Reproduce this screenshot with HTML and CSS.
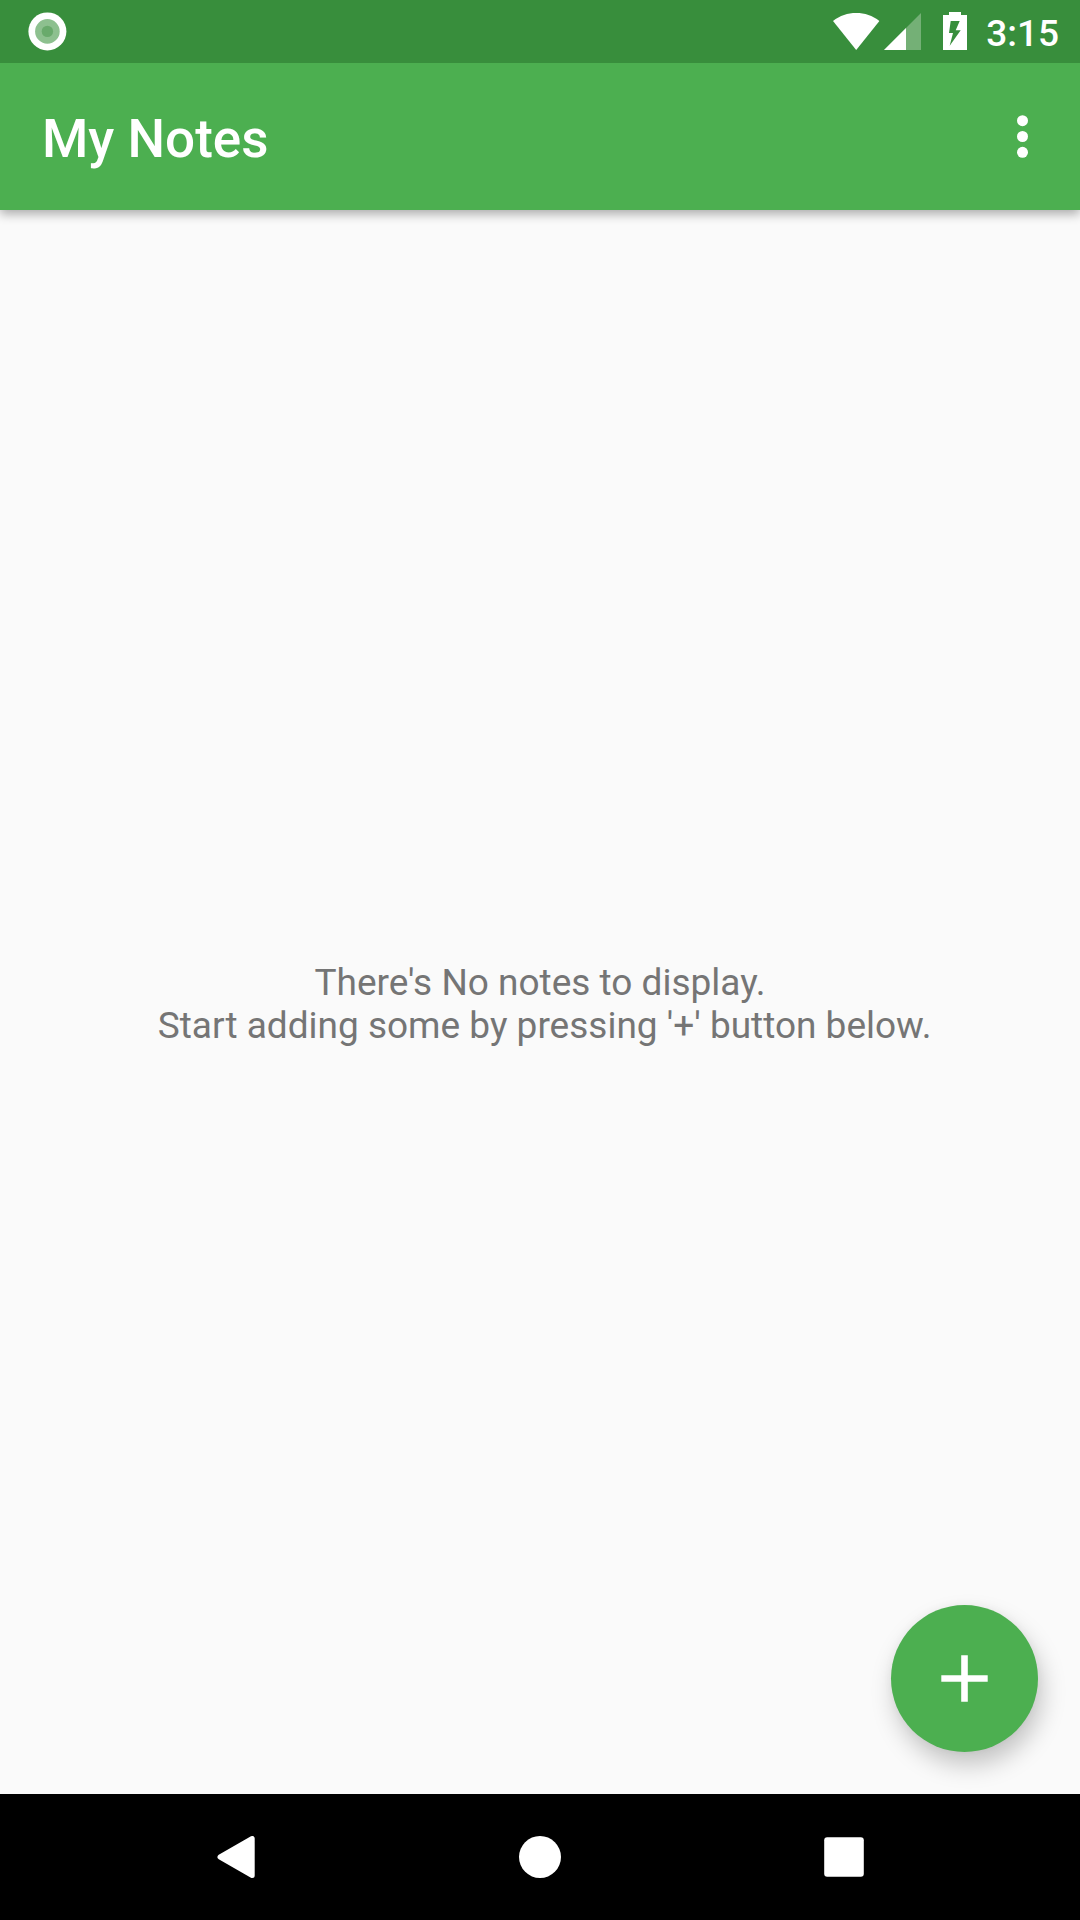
FILE: index.html
```html
<!DOCTYPE html>
<html lang="en">
<head>
<meta charset="utf-8">
<title>My Notes</title>
<link rel="stylesheet" href="styles.css">
</head>
<body>
<div class="screen">
  <div class="status-bar">
    <svg class="recording" width="40" height="40" viewBox="0 0 40 40">
      <circle cx="20.4" cy="20.4" r="19" fill="#fff"/>
      <circle cx="20.4" cy="20.4" r="12.3" fill="#8dc08f"/>
      <circle cx="20.4" cy="20.4" r="5.7" fill="#69aa6c"/>
    </svg>
    <div class="status-icons">
      <svg class="wifi" width="47" height="38" viewBox="0 0 47 38">
        <path d="M23.2 38 0 9C7 3.600 14.600 1 23.200 1S39.400 3.600 46.400 9Z" fill="#fff"/>
      </svg>
      <svg class="signal" width="37" height="37" viewBox="0 0 37 37">
        <path d="M37 0V37H0Z" fill="#fff" fill-opacity=".3"/>
        <path d="M22 15V37H0Z" fill="#fff"/>
      </svg>
      <svg class="battery" width="24" height="38" viewBox="0 0 24 38">
        <path fill="#fff" fill-rule="evenodd" d="M6 0H18V3H24V38H0V3H6ZM7.700 9 6 21H10L6.700 33.700 17.700 18.300H12.700L16.700 9Z"/>
      </svg>
      <span class="clock">3:15</span>
    </div>
  </div>
  <header class="app-bar">
    <h1 class="title">My Notes</h1>
    <svg class="overflow" width="12" height="44" viewBox="0 0 12 44" fill="#fff">
      <circle cx="5.500" cy="5.700" r="5.500"/>
      <circle cx="5.500" cy="21.500" r="5.500"/>
      <circle cx="5.500" cy="37.300" r="5.500"/>
    </svg>
  </header>
  <main class="content">
    <p class="empty">There's No notes to display.
 Start adding some by pressing '+' button below.</p>
    <button class="fab" aria-label="Add note">
      <svg width="147" height="147" viewBox="0 0 147 147">
        <path d="M50.300 73.500H96.700M73.500 50.300V96.700" stroke="#fff" stroke-width="6.600"/>
      </svg>
    </button>
  </main>
  <nav class="nav-bar">
    <svg width="42" height="42" viewBox="0 0 42 42">
      <path d="M37.200 2.500V39.500L5 21Z" fill="#fff" stroke="#fff" stroke-width="5" stroke-linejoin="round"/>
    </svg>
    <svg width="42" height="42" viewBox="0 0 42 42">
      <circle cx="21" cy="21" r="21" fill="#fff"/>
    </svg>
    <svg width="42" height="42" viewBox="0 0 42 42">
      <rect x="1.200" y="1.200" width="39.600" height="39.600" rx="3" fill="#fff"/>
    </svg>
  </nav>
</div>
</body>
</html>
```
FILE: styles.css
```css
* {
  box-sizing: border-box;
}

body {
  margin: 0;
  font-family: Roboto, sans-serif;
}

svg {
  display: block;
}

.screen {
  display: flex;
  flex-direction: column;
  width: 1080px;
  height: 1920px;
  overflow: hidden;
  background: #fafafa;
}

.status-bar {
  display: flex;
  justify-content: space-between;
  height: 63px;
  padding: 11px 21px 0 27px;
  background: #388e3c;
  z-index: 2;
}

.status-icons {
  display: grid;
  grid-template-columns: 47px 41px 42px auto;
  column-gap: 4px;
  align-items: start;
  width: 226px;
}

.wifi {
  margin-top: 1px;
}

.signal {
  margin-top: 2px;
}

.battery {
  margin: 1px 0 0 14px;
}

.clock {
  justify-self: end;
  color: #fff;
  font-size: 37px;
  font-weight: 500;
  line-height: 45px;
}

.app-bar {
  display: flex;
  align-items: center;
  justify-content: space-between;
  height: 147px;
  padding: 0 51px 0 42px;
  background: #4caf50;
  box-shadow: 0 4px 10px rgba(0, 0, 0, .32);
  z-index: 1;
}

.title {
  margin: 4px 0 0;
  color: #fff;
  font-size: 53px;
  font-weight: 500;
  line-height: 62px;
}

.content {
  display: flex;
  flex: 1;
  position: relative;
  align-items: center;
  justify-content: center;
}

.empty {
  margin: 4px 0 0;
  color: #757575;
  font-size: 37px;
  line-height: 43px;
  text-align: center;
  white-space: pre;
}

.fab {
  position: absolute;
  right: 42px;
  bottom: 42px;
  width: 147px;
  height: 147px;
  padding: 0;
  border: 0;
  border-radius: 50%;
  background: #4caf50;
  box-shadow: 4px 13px 24px rgba(0, 0, 0, .22), 0 0 10px rgba(0, 0, 0, .04);
}

.nav-bar {
  display: grid;
  grid-template-columns: repeat(3, 304px);
  place-content: center;
  place-items: center;
  height: 126px;
  background: #000;
  z-index: 1;
}
```
